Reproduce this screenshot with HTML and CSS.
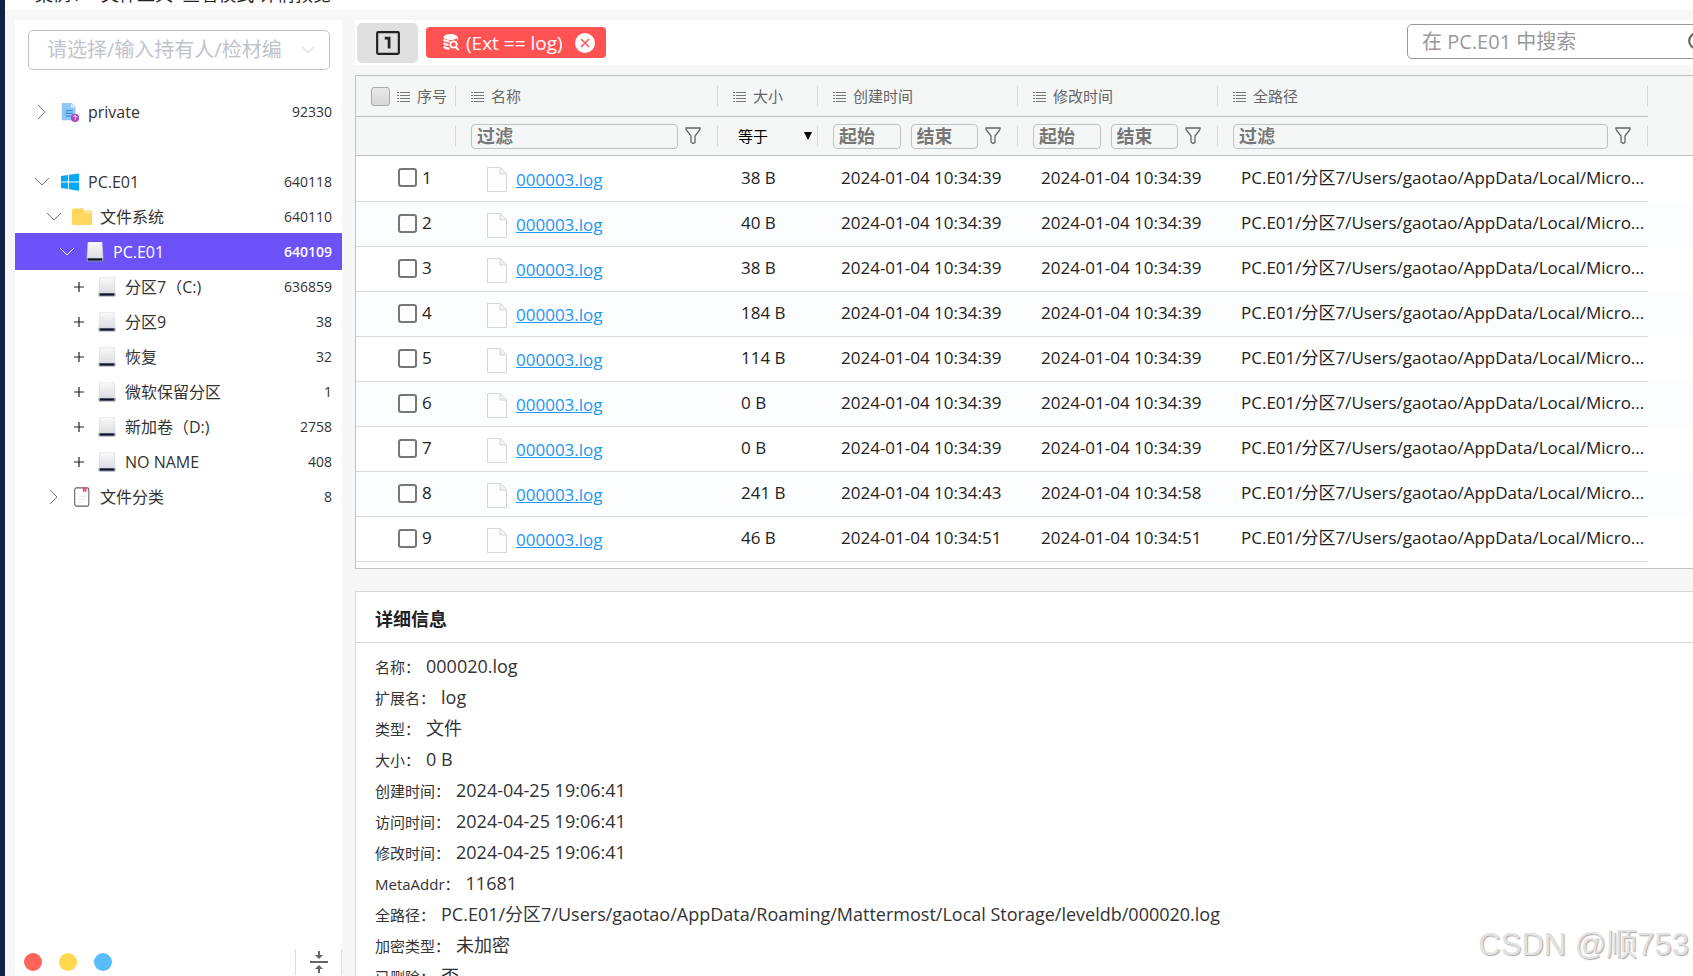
FILE: index.html
```
<!DOCTYPE html>
<html lang="zh-CN">
<head>
    <meta charset="UTF-8">
    <meta name="viewport" content="width=device-width, initial-scale=1.0">
    <title>PC.E01</title>
    <link rel="stylesheet" href="styles.css">
</head>
<body>

<svg class="sprite" aria-hidden="true">
    <symbol id="i-down" viewBox="0 0 16 10"><path d="M1 1l7 7 7-7" fill="none" stroke="currentColor"/></symbol>
    <symbol id="i-right" viewBox="0 0 10 16"><path d="M1 1l7 7-7 7" fill="none" stroke="currentColor"/></symbol>
    <symbol id="i-plus" viewBox="0 0 12 12"><path d="M6 1v10M1 6h10" fill="none" stroke="#222" stroke-width="1.200"/></symbol>
    <symbol id="i-list" viewBox="0 0 13 12"><path d="M0 2.500h2M3 2.500h10M0 5.500h2M3 5.500h10M0 8.500h2M3 8.500h10M0 11.500h2M3 11.500h10" stroke="#777" fill="none"/></symbol>
    <symbol id="i-filter" viewBox="0 0 16 18"><path d="M1 1h14v1.500L10 9v6.500l-2 1-2-1.500V9L1 2.500z" fill="none" stroke="#666" stroke-width="1.300"/></symbol>
    <symbol id="i-file" viewBox="0 0 20 25">
        <path d="M.5.5h13l6 6v18H.5z" fill="#fdfdfe" stroke="#d3d7da"/>
        <path d="M13 .5V7h6.500" fill="#f0f2f4" stroke="#d3d7da"/>
    </symbol>
    <symbol id="i-disk" viewBox="0 0 18 20">
        <path d="M2 0h14l1 16H1z" fill="url(#disk)" stroke="#d0d2d6" stroke-width=".6"/>
        <path d="M.5 16h17v2.500q0 1-1 1h-15q-1 0-1-1z" fill="#8b90a6"/>
        <path d="M2 16.500h14v2H2z" fill="#101426"/>
    </symbol>
    <linearGradient id="disk" x1="0" y1="0" x2="0" y2="1"><stop offset="0" stop-color="#fafafa"/><stop offset="1" stop-color="#dcdee3"/></linearGradient>
</svg>

<header class="topbar"><span>案例1 &gt; 文件工具 &nbsp;查看模式 详情预览</span></header>

<div class="layout">
    <aside class="sidebar">
        <label class="picker">
            <input type="text" aria-label="持有人/检材编号" placeholder="请选择/输入持有人/检材编">
            <svg><use href="#i-down"/></svg>
        </label>

        <ul class="tree">
            <li class="node level1 spaced">
                <svg class="toggle"><use href="#i-right"/></svg>
                <svg class="icon" viewBox="0 0 20 22">
                    <path d="M1 1h11l4 4v15H1z" fill="#8fc7f7"/><path d="M11 1v5h5z" fill="#d7ecfd"/>
                    <path d="M5 9.500h8M5 12.500h8M5 15.500h6" stroke="#3f8fe0" stroke-width="1.200"/>
                    <circle cx="15.500" cy="17.500" r="4.500" fill="#ab47bc"/>
                    <path d="M14 16.500q0-1.500 1.500-1.500t1.500 1.300-1.500 1.700M15.500 19v1" fill="none" stroke="#fff"/>
                </svg>
                <span class="name">private</span><span class="count">92330</span>
            </li>
            <li class="node level1">
                <svg class="toggle"><use href="#i-down"/></svg>
                <svg class="icon" viewBox="0 0 20 20"><path d="M1 4l7-1v6.500H1zM9 2.800L19 1.500v8H9zM1 10.500h7V17l-7-1zM9 10.500h10v8.300L9 17.300z" fill="#00a8f5"/></svg>
                <span class="name">PC.E01</span><span class="count">640118</span>
            </li>
            <li class="node level2">
                <svg class="toggle"><use href="#i-down"/></svg>
                <svg class="icon" viewBox="0 0 20 20"><path d="M0 3q0-1.500 1.500-1.500H9L11 3.500h7.500Q20 3.500 20 5v11.500q0 1.500-1.500 1.500h-17Q0 18 0 16.500z" fill="#ffd75e"/><path d="M8 1.500h2.500l1.500 2z" fill="#f9a03f"/><path d="M12.500 5.500h6" stroke="#fff1c4" stroke-width="1.500"/></svg>
                <span class="name">文件系统</span><span class="count">640110</span>
            </li>
            <li class="node level3 selected">
                <svg class="toggle"><use href="#i-down"/></svg>
                <svg class="icon"><use href="#i-disk"/></svg>
                <span class="name">PC.E01</span><span class="count">640109</span>
            </li>
            <li class="node level4">
                <svg class="toggle"><use href="#i-plus"/></svg>
                <svg class="icon"><use href="#i-disk"/></svg>
                <span class="name">分区7（C:)</span><span class="count">636859</span>
            </li>
            <li class="node level4">
                <svg class="toggle"><use href="#i-plus"/></svg>
                <svg class="icon"><use href="#i-disk"/></svg>
                <span class="name">分区9</span><span class="count">38</span>
            </li>
            <li class="node level4">
                <svg class="toggle"><use href="#i-plus"/></svg>
                <svg class="icon"><use href="#i-disk"/></svg>
                <span class="name">恢复</span><span class="count">32</span>
            </li>
            <li class="node level4">
                <svg class="toggle"><use href="#i-plus"/></svg>
                <svg class="icon"><use href="#i-disk"/></svg>
                <span class="name">微软保留分区</span><span class="count">1</span>
            </li>
            <li class="node level4">
                <svg class="toggle"><use href="#i-plus"/></svg>
                <svg class="icon"><use href="#i-disk"/></svg>
                <span class="name">新加卷（D:)</span><span class="count">2758</span>
            </li>
            <li class="node level4">
                <svg class="toggle"><use href="#i-plus"/></svg>
                <svg class="icon"><use href="#i-disk"/></svg>
                <span class="name">NO NAME</span><span class="count">408</span>
            </li>
            <li class="node level2">
                <svg class="toggle"><use href="#i-right"/></svg>
                <svg class="icon" viewBox="0 0 20 22"><rect x="2" y="1" width="15.500" height="20" rx="2" fill="#fff" stroke="#5a6270" stroke-width="1.200"/><path d="M11 0h4v6l-2-1.500L11 6z" fill="#ff4d6d"/><path d="M6 10.500h8M6 13.500h8M6 16.500h5" stroke="#e4e7ec"/></svg>
                <span class="name">文件分类</span><span class="count">8</span>
            </li>
        </ul>

        <div class="sidebar-foot">
            <span class="dot red"></span>
            <span class="dot yellow"></span>
            <span class="dot blue"></span>
            <button class="collapse" aria-label="折叠">
                <svg viewBox="0 0 18 24"><path d="M0 12h18" stroke="#666" stroke-width="2"/><path d="M9 1v5M9 23v-5" stroke="#666" stroke-width="2"/><path d="M5 5h8L9 9zM5 19h8l-4-4z" fill="#666"/></svg>
            </button>
        </div>
    </aside>

    <main class="main">
        <div class="toolbar">
            <button class="page-btn" aria-label="1">
                <svg viewBox="0 0 24 24"><rect x="2" y="2" width="20" height="20" rx="1" fill="none" stroke="#222" stroke-width="2"/><path d="M9 7.500h4V17" fill="none" stroke="#222" stroke-width="2.500"/></svg>
            </button>
            <button class="tag">
                <svg class="tag-db" viewBox="0 0 16 17">
                    <ellipse cx="7.500" cy="3" rx="7" ry="3" fill="#fff"/>
                    <path d="M.5 5.500q2 2 6 2M.5 9q1.500 1.700 5 2M.5 12.500q2 2 6 2.300" fill="none" stroke="#fff" stroke-width="2"/>
                    <path d="M14.500 3v3.500" stroke="#fff"/>
                    <circle cx="10.500" cy="10.500" r="3.200" fill="none" stroke="#fff" stroke-width="1.800"/>
                    <path d="M13 13l2.500 3" stroke="#fff" stroke-width="2"/>
                </svg>
                <span>(Ext == log)</span>
                <svg class="tag-close" viewBox="0 0 20 20"><circle cx="10" cy="10" r="10" fill="#fff"/><path d="M6 6l8 8M14 6l-8 8" stroke="#ff5252" stroke-width="1.500"/></svg>
            </button>
            <label class="search">
                <input type="text" aria-label="搜索" placeholder="在 PC.E01 中搜索">
                <svg viewBox="0 0 20 20"><circle cx="9" cy="9" r="7" fill="none" stroke="#666" stroke-width="2"/><path d="M14 14l5 5" stroke="#666" stroke-width="2"/></svg>
            </label>
        </div>

        <section class="grid">
            <table>
                <colgroup><col class="c-no"><col class="c-name"><col class="c-size"><col class="c-time"><col class="c-time"><col class="c-path"><col></colgroup>
                <thead>
                    <tr class="titles">
                        <th><div class="head first"><input type="checkbox" class="check-all" aria-label="全选"><svg><use href="#i-list"/></svg>序号</div></th>
                        <th><div class="head"><svg><use href="#i-list"/></svg>名称</div></th>
                        <th><div class="head"><svg><use href="#i-list"/></svg>大小</div></th>
                        <th><div class="head"><svg><use href="#i-list"/></svg>创建时间</div></th>
                        <th><div class="head"><svg><use href="#i-list"/></svg>修改时间</div></th>
                        <th><div class="head"><svg><use href="#i-list"/></svg>全路径</div></th>
                        <td class="rest"></td>
                    </tr>
                    <tr class="filters">
                        <td><div class="filter"></div></td>
                        <td><div class="filter"><input type="text" placeholder="过滤" aria-label="名称过滤"><svg><use href="#i-filter"/></svg></div></td>
                        <td><div class="filter size"><select aria-label="大小比较"><option>等于</option></select><span class="caret"></span></div></td>
                        <td><div class="filter"><input type="text" placeholder="起始" aria-label="创建时间起始"><input type="text" placeholder="结束" aria-label="创建时间结束"><svg><use href="#i-filter"/></svg></div></td>
                        <td><div class="filter"><input type="text" placeholder="起始" aria-label="修改时间起始"><input type="text" placeholder="结束" aria-label="修改时间结束"><svg><use href="#i-filter"/></svg></div></td>
                        <td><div class="filter"><input type="text" placeholder="过滤" aria-label="全路径过滤"><svg><use href="#i-filter"/></svg></div></td>
                        <td class="rest"></td>
                    </tr>
                </thead>
                <tbody id="rows"></tbody>
            </table>
        </section>

        <section class="detail">
            <h2>详细信息</h2>
            <dl>
                <div><dt>名称：</dt><dd>000020.log</dd></div>
                <div><dt>扩展名：</dt><dd>log</dd></div>
                <div><dt>类型：</dt><dd>文件</dd></div>
                <div><dt>大小：</dt><dd>0 B</dd></div>
                <div><dt>创建时间：</dt><dd>2024-04-25 19:06:41</dd></div>
                <div><dt>访问时间：</dt><dd>2024-04-25 19:06:41</dd></div>
                <div><dt>修改时间：</dt><dd>2024-04-25 19:06:41</dd></div>
                <div><dt>MetaAddr：</dt><dd>11681</dd></div>
                <div><dt>全路径：</dt><dd>PC.E01/分区7/Users/gaotao/AppData/Roaming/Mattermost/Local Storage/leveldb/000020.log</dd></div>
                <div><dt>加密类型：</dt><dd>未加密</dd></div>
                <div><dt>已删除：</dt><dd>否</dd></div>
            </dl>
        </section>
    </main>
</div>

<div class="watermark">CSDN @顺753</div>

<script src="script.js"></script>
</body>
</html>
```
FILE: styles.css
```
* {
    box-sizing: border-box;
}
body {
    margin: 0;
    height: 100vh;
    overflow: hidden;
    display: flex;
    flex-direction: column;
    border-left: 5px solid #132043;
    background: #f7f7f7;
    color: #333;
    font-family: "Open Sans", "Noto Sans CJK SC", sans-serif;
    font-size: 17px;
    line-height: 24px;
}
input, select, button {
    font: inherit;
    color: inherit;
}
.sprite {
    position: absolute;
    width: 0;
    height: 0;
}
.topbar {
    height: 10px;
    flex: none;
    display: flex;
    align-items: flex-end;
    padding: 0 0 4px 30px;
    background: #fff;
    color: #222;
    font-size: 18px;
    white-space: nowrap;
}
.layout {
    flex: 1;
    min-height: 0;
    display: flex;
    gap: 13px;
    padding: 10px 0 0 10px;
}

/* sidebar */
.sidebar {
    width: 327px;
    flex: none;
    display: flex;
    flex-direction: column;
    background: #fff;
}
.picker {
    display: flex;
    align-items: center;
    height: 40px;
    margin: 10px 12px 24px 13px;
    padding: 0 14px 0 18px;
    border: 1px solid #c0c4cc;
    border-radius: 5px;
    color: #c0c4cc;
}
.picker input {
    flex: 1;
    min-width: 0;
    padding: 0;
    border: 0;
    outline: 0;
    background: none;
    font-size: 20px;
}
.picker input::placeholder {
    color: #c0c4cc;
}
.picker svg {
    width: 14px;
    height: 10px;
}
.tree {
    flex: 1;
    margin: 0;
    padding: 0;
    list-style: none;
}
.node {
    display: flex;
    align-items: center;
    height: 35px;
    padding-right: 10px;
    font-size: 16px;
}
.spaced {
    margin-bottom: 35px;
}
.level1 {
    padding-left: 19px;
}
.level2 {
    padding-left: 31px;
}
.level3 {
    padding-left: 44px;
}
.level4 {
    padding-left: 56px;
}
.toggle {
    width: 16px;
    height: 16px;
    margin-right: 10px;
    color: #777;
}
.level4 .toggle {
    height: 12px;
}
.icon {
    width: 20px;
    height: 20px;
    margin-right: 8px;
}
.name {
    flex: 1;
}
.count {
    font-size: 14px;
}
.selected {
    height: 37px;
    margin: -1px 0;
    background: #6c52f8;
    color: #fff;
}
.selected .toggle {
    color: #fff;
}
.selected .count {
    font-weight: 600;
}
.sidebar-foot {
    display: flex;
    align-items: center;
    gap: 17px;
    height: 28px;
    padding-left: 9px;
}
.dot {
    width: 18px;
    height: 18px;
    border-radius: 50%;
}
.red {
    background: #ff6459;
}
.yellow {
    background: #ffd84f;
}
.blue {
    background: #58bdfa;
}
.collapse {
    display: flex;
    align-items: center;
    justify-content: center;
    width: 47px;
    height: 26px;
    margin-left: auto;
    padding: 0;
    border: solid #ddd;
    border-width: 0 1px;
    background: none;
}
.collapse svg {
    width: 18px;
    height: 24px;
}

/* toolbar */
.main {
    flex: 1;
    min-width: 0;
    display: flex;
    flex-direction: column;
    overflow: hidden;
}
.toolbar {
    display: flex;
    align-items: center;
    flex: none;
    height: 45px;
    padding-left: 2px;
    margin-bottom: 10px;
    background: #fff;
}
.page-btn {
    display: flex;
    align-items: center;
    justify-content: center;
    width: 61px;
    height: 40px;
    border: 0;
    border-radius: 5px;
    background: #e0e0e0;
}
.page-btn svg {
    width: 26px;
    height: 26px;
}
.tag {
    display: flex;
    align-items: center;
    width: 180px;
    height: 31px;
    margin-left: 8px;
    padding: 0 11px 0 17px;
    border: 0;
    border-radius: 4px;
    background: #ff5252;
    color: #fff;
    font-size: 19px;
    white-space: nowrap;
}
.tag-db {
    width: 16px;
    height: 17px;
    margin-right: 7px;
}
.tag-close {
    width: 20px;
    height: 20px;
    margin-left: auto;
}
.search {
    display: flex;
    align-items: center;
    width: 311px;
    height: 35px;
    margin: 0 -25px 2px auto;
    padding: 0 8px 0 14px;
    border: 1px solid #999;
    border-radius: 5px;
}
.search input {
    flex: 1;
    min-width: 0;
    padding: 0;
    border: 0;
    outline: 0;
    font-size: 20px;
}
.search input::placeholder {
    color: #999;
}
.search svg {
    width: 22px;
    height: 22px;
}

/* result grid */
.grid {
    flex: none;
    height: 494px;
    margin-bottom: 22px;
    overflow: hidden;
    border: 1px solid #bdc3c7;
    border-right: 0;
    background: #fff;
}
table {
    width: 100%;
    table-layout: fixed;
    border-collapse: separate;
    border-spacing: 0;
}
.c-no, .c-size {
    width: 100px;
}
.c-name {
    width: 262px;
}
.c-time {
    width: 200px;
}
.c-path {
    width: 430px;
}
th, td {
    padding: 0;
    text-align: left;
}
thead {
    background: #f5f7f7;
}
.titles th, .titles td {
    height: 41px;
    border-bottom: 1px solid #bdc3c7;
}
.titles .rest {
    border-bottom-color: #f5f7f7;
}
.filters td {
    height: 39px;
    border-bottom: 1px solid #bdc3c7;
}
.head, .filter {
    display: flex;
    align-items: center;
    height: 20px;
    padding: 0 16px 0 15px;
    border-right: 1px solid #d5d8da;
}
.head {
    color: #666;
    font-size: 15px;
    font-weight: 400;
}
.first {
    padding-right: 0;
    white-space: nowrap;
}
.head svg {
    flex: none;
    width: 13px;
    height: 12px;
    margin-right: 7px;
}
.check-all {
    flex: none;
    appearance: none;
    width: 19px;
    height: 19px;
    margin: 0 7px 0 0;
    border: 1px solid #aaa;
    border-radius: 3px;
    background: linear-gradient(#e8e8e8, #d8d8d8);
}
.filter {
    gap: 10px;
}
.filter input {
    flex: 1;
    min-width: 0;
    height: 25px;
    padding: 0 5px;
    border: 1px solid #bdc3c7;
    border-radius: 4px;
    background: none;
    font-size: 18px;
}
.filter input::placeholder {
    color: #777;
    font-weight: 700;
}
.filter svg {
    flex: none;
    width: 16px;
    height: 18px;
    margin-left: -3px;
}
.size {
    gap: 0;
    padding: 0 5px 0 20px;
}
.size select {
    flex: 1;
    min-width: 0;
    padding: 0;
    appearance: none;
    border: 0;
    background: none;
    color: #000;
    font-size: 15px;
}
.caret {
    border: solid transparent;
    border-width: 8px 4px 0;
    border-top-color: #000;
}
tbody td {
    height: 45px;
    padding: 0 0 2px 23px;
    border-bottom: 1px solid #d9dcde;
    color: #222;
    white-space: nowrap;
}
tbody tr:first-child td {
    height: 46px;
}
tbody tr:nth-child(even) td {
    background: #fcfdfe;
}
tbody td.rest {
    border-bottom: 0;
    background: #fff;
}
tbody .no {
    padding-left: 42px;
}
.no label {
    display: flex;
    align-items: center;
    gap: 5px;
}
.no input {
    appearance: none;
    width: 19px;
    height: 19px;
    margin: 0;
    border: 2px solid #777;
    border-radius: 3px;
}
tbody .file {
    padding: 2px 0 0 31px;
}
.file a {
    display: flex;
    align-items: center;
    gap: 9px;
    color: #2196f3;
}
.file svg {
    width: 20px;
    height: 25px;
}

/* detail */
.detail {
    flex: 1;
    min-height: 0;
    overflow: hidden;
    border: 1px solid #d5d8da;
    border-width: 1px 0 0 1px;
    background: #fff;
}
h2 {
    height: 51px;
    margin: 0;
    padding-left: 19px;
    border-bottom: 1px solid #d5d8da;
    color: #222;
    font-size: 18px;
    font-weight: 700;
    line-height: 54px;
}
dl {
    margin: 8px 0 0;
    padding-left: 19px;
}
dl div {
    display: flex;
    align-items: baseline;
    height: 31px;
    line-height: 31px;
    white-space: nowrap;
}
dt {
    margin-right: 6px;
    font-size: 15px;
}
dd {
    margin: 0;
    font-size: 18px;
}
.watermark {
    position: absolute;
    right: 4px;
    bottom: 10px;
    color: #e2e2e2;
    font: 31px/42px "Liberation Sans", "Noto Sans CJK SC", sans-serif;
    text-shadow: 1px 1px 1px #aaa;
}
```
FILE: script.js
```
const files = [
    ['38 B', '10:34:39', '10:34:39'],
    ['40 B', '10:34:39', '10:34:39'],
    ['38 B', '10:34:39', '10:34:39'],
    ['184 B', '10:34:39', '10:34:39'],
    ['114 B', '10:34:39', '10:34:39'],
    ['0 B', '10:34:39', '10:34:39'],
    ['0 B', '10:34:39', '10:34:39'],
    ['241 B', '10:34:43', '10:34:58'],
    ['46 B', '10:34:51', '10:34:51']
];

document.getElementById('rows').innerHTML = files.map(function(file, i) {
    return '<tr>' +
        '<td class="no"><label><input type="checkbox">' + (i + 1) + '</label></td>' +
        '<td class="file"><a href="#"><svg><use href="#i-file"/></svg>000003.log</a></td>' +
        '<td>' + file[0] + '</td>' +
        '<td>2024-01-04 ' + file[1] + '</td>' +
        '<td>2024-01-04 ' + file[2] + '</td>' +
        '<td>PC.E01/分区7/Users/gaotao/AppData/Local/Micro...</td>' +
        '<td class="rest"></td>' +
        '</tr>';
}).join('');
```
